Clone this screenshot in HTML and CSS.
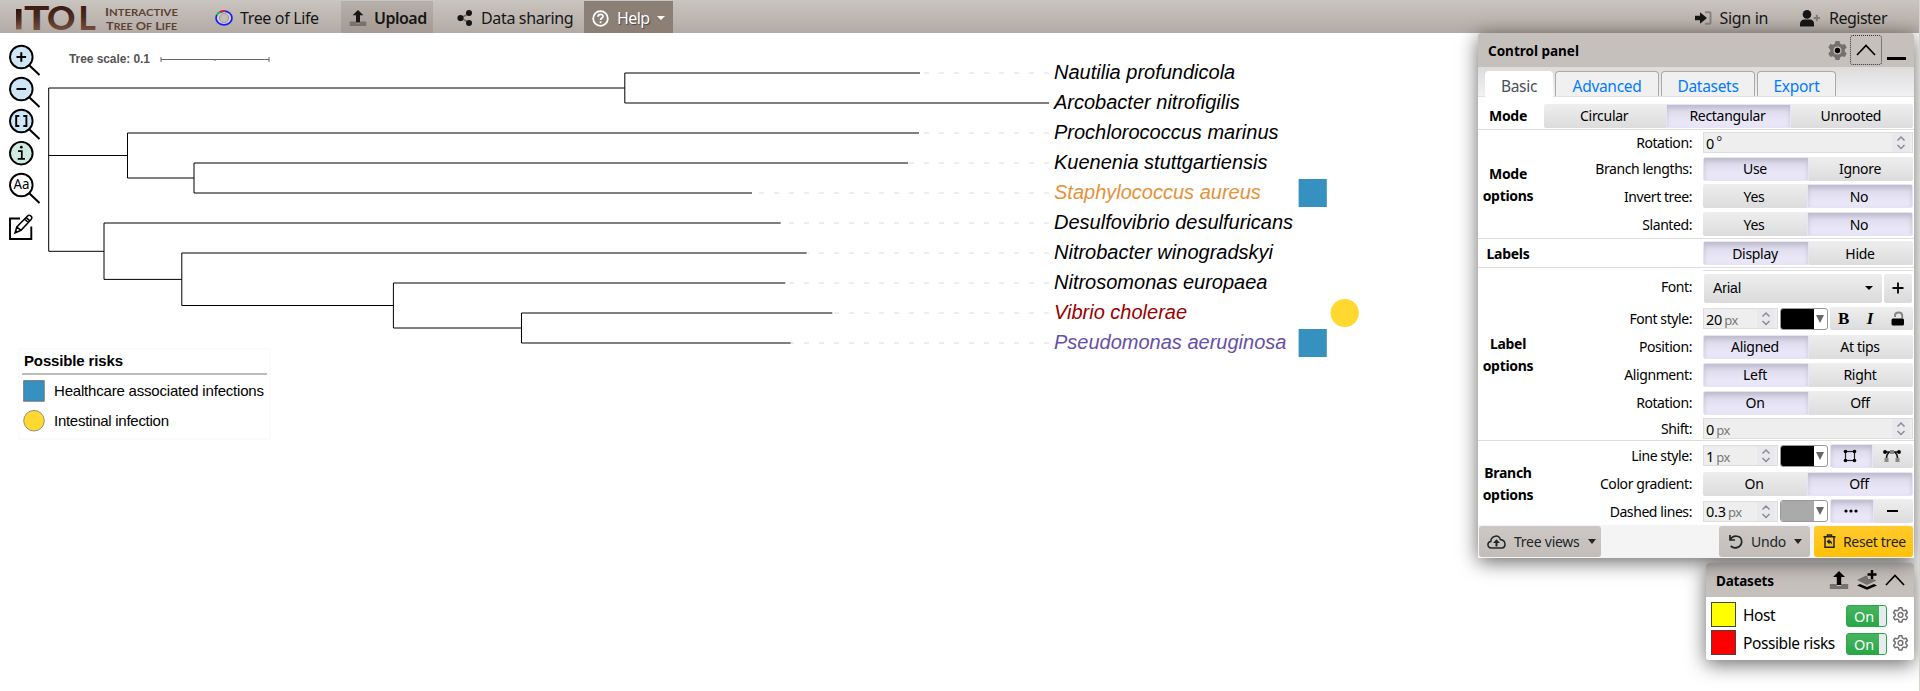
FILE: index.html
```html
<!DOCTYPE html>
<html lang="en">
<head>
<meta charset="utf-8">
<title>iTOL: Interactive Tree Of Life</title>
<link rel="stylesheet" href="styles.css">
</head>
<body>
<svg class="defs" width="0" height="0" aria-hidden="true">
  <defs>
    <linearGradient id="logo-fill" x1="0" y1="0" x2="0" y2="1">
      <stop offset="0" stop-color="#2e120c"/><stop offset=".5" stop-color="#4a2a20"/><stop offset="1" stop-color="#86604e"/>
    </linearGradient>
    <symbol id="i-upload" viewBox="0 0 20 20">
      <path d="M2 14h6v2h4v-2h6v5H2z" fill="#777270" transform="translate(-1.5 0) scale(1.15 1)"/>
      <path d="M10 1l6 6h-3.8v8H7.8V7H4z" fill="currentColor"/>
    </symbol>
    <symbol id="i-chev" viewBox="0 0 20 12"><path d="M1 11L10 1.5 19 11" fill="none" stroke="#000" stroke-width="1.7"/></symbol>
    <symbol id="i-step" viewBox="0 0 18 19"><path d="M5.500 7.500L9 4l3.500 3.500M5.500 12L9 15.500l3.500-3.500" fill="none" stroke="#8b8b96" stroke-width="1.500"/></symbol>
    <symbol id="i-lens" viewBox="0 0 34 34"><circle cx="13.300" cy="13" r="11.300" stroke="#000" stroke-width="1.900"/><path d="M21.500 21.500l10 9.500" stroke="#000" stroke-width="2"/></symbol>
    <symbol id="i-gear" viewBox="0 0 16 16">
      <path d="M6.700.8h2.600l.5 2 1.400.8 2-.6 1.300 2.300-1.500 1.400v1.600l1.500 1.400-1.300 2.300-2-.6-1.400.8-.5 2H6.700l-.5-2-1.400-.8-2 .6-1.300-2.300L3 8.300V6.700L1.500 5.300 2.800 3l2 .6 1.400-.8z" fill="none" stroke="#707070" stroke-width="1.400" stroke-linejoin="round"/>
      <circle cx="8" cy="7.500" r="2.300" fill="none" stroke="#707070" stroke-width="1.300"/>
    </symbol>
  </defs>
</svg>

<header class="topbar">
  <svg class="logo" width="185" height="32" viewBox="0 0 185 32">
    <g class="logo-big">
      <rect x="16" y="8" width="5.500" height="20.500" fill="url(#logo-fill)"/>
      <text x="24" y="28.500" textLength="25" lengthAdjust="spacingAndGlyphs">T</text>
      <text x="47" y="28.500" textLength="28" lengthAdjust="spacingAndGlyphs">O</text>
      <text x="78.500" y="28.500" textLength="17" lengthAdjust="spacingAndGlyphs">L</text>
    </g>
    <g class="logo-small">
      <text x="105" y="15" textLength="73" lengthAdjust="spacingAndGlyphs">I<tspan class="sc">NTERACTIVE</tspan></text>
      <text x="106" y="29" textLength="71" lengthAdjust="spacingAndGlyphs">T<tspan class="sc">REE</tspan> O<tspan class="sc">F</tspan> L<tspan class="sc">IFE</tspan></text>
    </g>
  </svg>
  <nav class="menu">
    <a class="item tol">
      <svg width="18" height="16" viewBox="0 0 18 16">
        <ellipse cx="9" cy="8" rx="8" ry="6.800" fill="#d6d4da" stroke="#1420ff" stroke-width="1.700"/>
        <path d="M5 2.100A8 6.800 0 0 1 10.500 1.200" fill="none" stroke="#f01818" stroke-width="1.700"/>
        <path d="M1.600 5.200A8 6.800 0 0 1 5 2.100" fill="none" stroke="#18d020" stroke-width="1.700"/>
        <circle cx="9" cy="8" r="4.600" fill="#c2bdba" stroke="#8e8a88" stroke-width=".8"/>
      </svg><span>Tree of Life</span></a>
    <a class="item upload"><svg width="18" height="18"><use href="#i-upload"/></svg><span>Upload</span></a>
    <a class="item share"><svg width="16" height="18" viewBox="0 0 16 18">
      <path d="M13 3.800L4 9l9 5.200" fill="none" stroke="#77706c" stroke-width="1.600"/>
      <circle cx="12" cy="4" r="3" fill="#161616"/><circle cx="3.500" cy="9" r="3.100" fill="#161616"/><circle cx="12" cy="14" r="3" fill="#161616"/>
    </svg><span>Data sharing</span></a>
    <a class="item help"><svg width="17" height="17" viewBox="0 0 17 17">
      <circle cx="8.500" cy="8.500" r="7.300" fill="none" stroke="#fff" stroke-width="1.800"/>
      <path d="M6 6.800c.1-3.400 5.200-3.100 5-.3-.1 1.600-2.400 1.600-2.400 3.400M8.600 11.300v1.900" fill="none" stroke="#fff" stroke-width="1.800"/>
    </svg><span>Help</span><i class="caret"></i></a>
  </nav>
  <nav class="account">
    <a class="item signin"><svg width="17" height="14" viewBox="0 0 17 14">
      <path d="M10 1.200h4.500a1 1 0 0 1 1 1v9.600a1 1 0 0 1-1 1H10" fill="none" stroke="#8a8481" stroke-width="2"/>
      <path d="M0 4.700h5V1.200L12 7l-7 5.800V9.300H0z" fill="#161616"/>
    </svg><span>Sign in</span></a>
    <a class="item register"><svg width="20" height="17" viewBox="0 0 20 17">
      <circle cx="7" cy="4.400" r="4.300" fill="#161616"/><path d="M0 16.500V14c0-3 2-4.500 4.500-4.500h5.500c2.500 0 4 1.500 4 4.500v2.500z" fill="#161616"/>
      <path d="M16.800 4.700v6.500M13.600 8h6.400" stroke="#807a77" stroke-width="1.900"/>
    </svg><span>Register</span></a>
  </nav>
</header>

<main class="canvas">
  <svg class="tree" width="1470" height="658" viewBox="0 33 1470 658">
    <text class="scale-text" x="69" y="63" textLength="81">Tree scale: 0.1</text>
    <path class="scale-bar" d="M161 59.500H269M161 57v5M269 57v5M215 59.500v1.500"/>
    <g class="branches">
      <path d="M48.700 88V251.300M48.700 88H624.800M624.800 73V103M624.800 73H920M624.800 103H1049"/>
      <path d="M48.700 155.500H127.500M127.500 133V178M127.500 133H919M127.500 178H194M194 163V193M194 163H908M194 193H752"/>
      <path d="M48.700 251.300H104M104 223V279.400M104 223H780.700M104 279.400H181.800M181.800 253V305.500M181.800 253H806.700"/>
      <path d="M181.800 305.500H393.400M393.400 283V328M393.400 283H785.300M393.400 328H521.500M521.500 313V343M521.500 313H832.300M521.500 343H790.700"/>
    </g>
    <path class="leaders" d="M1049 73.050H921M1049 133.050H920M1049 163.050H909M1049 193.050H753M1049 223.050H782M1049 253.050H808M1049 283.050H786M1049 313.050H833M1049 343.050H791"/>
    <g class="leaves">
      <text x="1054" y="79">Nautilia profundicola</text>
      <text x="1054" y="109">Arcobacter nitrofigilis</text>
      <text x="1054" y="139">Prochlorococcus marinus</text>
      <text x="1054" y="169">Kuenenia stuttgartiensis</text>
      <text x="1054" y="199" fill="#e69138">Staphylococcus aureus</text>
      <text x="1054" y="229">Desulfovibrio desulfuricans</text>
      <text x="1054" y="259">Nitrobacter winogradskyi</text>
      <text x="1054" y="289">Nitrosomonas europaea</text>
      <text x="1054" y="319" fill="#990000">Vibrio cholerae</text>
      <text x="1054" y="349" fill="#674ea7">Pseudomonas aeruginosa</text>
    </g>
    <rect x="1298.600" y="179" width="28.200" height="28" fill="#3690c0"/>
    <rect x="1298.600" y="329" width="28.200" height="28" fill="#3690c0"/>
    <circle cx="1344.700" cy="313" r="14.100" fill="#ffd92f"/>
    <g class="legend">
      <rect x="19" y="349" width="251" height="90" fill="#fff" stroke="#fafafa" stroke-width="1.500"/>
      <text class="legend-title" x="24" y="366" textLength="99">Possible risks</text>
      <path d="M22 374H267" stroke="#bcbcbc" stroke-width="2"/>
      <rect x="23.700" y="380.700" width="20.500" height="20.500" fill="#3690c0" stroke="#666" stroke-width=".8"/>
      <text x="54" y="396" textLength="210">Healthcare associated infections</text>
      <circle cx="34" cy="420.700" r="10.300" fill="#ffd92f" stroke="#777" stroke-width=".8"/>
      <text x="54" y="426" textLength="115">Intestinal infection</text>
    </g>
  </svg>

  <div class="tools">
    <svg width="34" height="32" viewBox="0 0 34 32"><use href="#i-lens" width="34" height="34" fill="#cfe6f6"/><path d="M8.500 13h9.600M13.300 8.200v9.600" stroke="#000" stroke-width="2"/></svg>
    <svg width="34" height="32" viewBox="0 0 34 32"><use href="#i-lens" width="34" height="34" fill="#cfe6f6"/><path d="M8.500 13h9.600" stroke="#000" stroke-width="2"/></svg>
    <svg width="34" height="32" viewBox="0 0 34 32"><use href="#i-lens" width="34" height="34" fill="#cfe6f6"/><path d="M11.300 8H8.200v10h3.100M15.300 8h3.100v10h-3.100" fill="none" stroke="#000" stroke-width="1.900"/></svg>
    <svg width="34" height="32" viewBox="0 0 34 32"><circle cx="13.300" cy="13.200" r="11.300" fill="#cfeae0" stroke="#000" stroke-width="1.900"/><path d="M10 11.200h3.800v7.600M9.700 18.900h7.300" fill="none" stroke="#000" stroke-width="1.700"/><circle cx="13.300" cy="7.200" r="1.400"/></svg>
    <svg width="34" height="32" viewBox="0 0 34 32"><use href="#i-lens" width="34" height="34" fill="#fff"/><text x="5.500" y="17.300" font-size="13.500" textLength="16" lengthAdjust="spacingAndGlyphs">Aa</text></svg>
    <svg class="edit" width="26" height="27" viewBox="0 0 26 27">
      <path d="M12 4.500H2V25h21.300V12.500" fill="none" stroke="#000" stroke-width="1.900"/>
      <path d="M7 19l1.800-6L19.500 2c1.300-1.200 2.400-.9 3.300-.1 1.200 1.100 1.500 2.200.3 3.500L13 16.300zM8.800 13l4.200 3.300M16.500 5l3.800 3.500M18 3.400l3.800 3.500" fill="#fff" stroke="#000" stroke-width="1.500"/>
      <path d="M7 19l.9-3 1.800 1.700z"/>
    </svg>
  </div>

  <aside class="panels">
    <section class="panel control">
      <div class="panel-head">
        <h2>Control panel</h2>
        <svg width="21" height="21" viewBox="0 0 21 21"><path d="M8.500 1h4l.6 2.600 2 1.100L17.700 4l2 3.500-1.900 1.900v2.200l1.900 1.900-2 3.500-2.600-.8-2 1.200-.6 2.600h-4l-.6-2.600-2-1.200-2.600.8-2-3.500 1.900-1.900V9.400L1.300 7.500l2-3.500 2.600.7 2-1.100z" fill="#74706e"/><circle cx="10.500" cy="10.500" r="4" fill="#bfb9b7"/><circle cx="10.500" cy="10.500" r="2.700" fill="#000"/></svg>
        <span class="focus"><svg width="20" height="12"><use href="#i-chev"/></svg></span>
        <i class="minimise"></i>
      </div>
      <div class="tabs"><a class="tab on t1">Basic</a><a class="tab t2">Advanced</a><a class="tab t3">Datasets</a><a class="tab t4">Export</a></div>

      <div class="group mode">
        <h3>Mode</h3>
        <div class="seg wide"><b>Circular</b><b class="on">Rectangular</b><b>Unrooted</b></div>
      </div>

      <div class="group">
        <h3>Mode options</h3>
        <div class="rows">
          <div class="row h25"><label>Rotation:</label><div class="field"><span>0 <small class="deg">°</small></span><svg width="18" height="19"><use href="#i-step"/></svg></div></div>
          <div class="row h27"><label>Branch lengths:</label><div class="seg"><b class="on">Use</b><b>Ignore</b></div></div>
          <div class="row h28"><label>Invert tree:</label><div class="seg"><b>Yes</b><b class="on">No</b></div></div>
          <div class="row h28"><label>Slanted:</label><div class="seg"><b>Yes</b><b class="on">No</b></div></div>
        </div>
      </div>

      <div class="group">
        <h3>Labels</h3>
        <div class="rows"><div class="row h28"><label></label><div class="seg"><b class="on">Display</b><b>Hide</b></div></div></div>
      </div>

      <div class="group">
        <h3>Label options</h3>
        <div class="rows">
          <div class="row h37"><label>Font:</label><div class="fontpick"><div class="select"><span>Arial</span><i class="caret"></i></div><div class="plus"><svg width="12" height="12" viewBox="0 0 12 12"><path d="M.5 6h11M6 .5v11" stroke="#000" stroke-width="1.800"/></svg></div></div></div>
          <div class="row h27"><label>Font style:</label><div class="combo">
            <div class="field short"><span>20 <small>px</small></span><svg width="18" height="19"><use href="#i-step"/></svg></div>
            <div class="color"><i class="black"></i><em></em></div>
            <div class="icons"><span class="bold">B</span><span class="ital">I</span><svg width="14" height="15" viewBox="0 0 14 15"><path d="M4 6V4.500C4 .4 11.200.4 11.200 4.500V7.500" fill="none" stroke="#858585" stroke-width="1.900"/><rect x=".5" y="7.500" width="12.500" height="7" rx="1.500"/></svg></div>
          </div></div>
          <div class="row h29"><label>Position:</label><div class="seg"><b class="on">Aligned</b><b>At tips</b></div></div>
          <div class="row h27"><label>Alignment:</label><div class="seg"><b class="on">Left</b><b>Right</b></div></div>
          <div class="row h29"><label>Rotation:</label><div class="seg"><b class="on">On</b><b>Off</b></div></div>
          <div class="row h23"><label>Shift:</label><div class="field"><span>0 <small>px</small></span><svg width="18" height="19"><use href="#i-step"/></svg></div></div>
        </div>
      </div>

      <div class="group last">
        <h3>Branch options</h3>
        <div class="rows">
          <div class="row h29"><label>Line style:</label><div class="combo">
            <div class="field short"><span>1 <small>px</small></span><svg width="18" height="19"><use href="#i-step"/></svg></div>
            <div class="color"><i class="black"></i><em></em></div>
            <div class="seg pair"><b class="on"><svg width="14" height="14" viewBox="0 0 14 14"><rect x="2.500" y="2.500" width="9" height="9" fill="none" stroke="#222" stroke-width="1.200"/><circle cx="2.500" cy="2.500" r="1.800"/><circle cx="11.500" cy="2.500" r="1.800"/><circle cx="2.500" cy="11.500" r="1.800"/><circle cx="11.500" cy="11.500" r="1.800"/></svg></b><b><svg width="18" height="14" viewBox="0 0 18 14"><path d="M1.500 3h15M6 3.500C4 5 3.500 7 3.500 9M12 3.500C14 5 14.500 7 14.500 9" fill="none" stroke="#111" stroke-width="1.500"/><circle cx="2" cy="3" r="1.900"/><circle cx="16" cy="3" r="1.900"/><rect x="7" y="1" width="4" height="4" fill="#888"/><rect x="1.500" y="9" width="4" height="4" fill="#888"/><rect x="12.500" y="9" width="4" height="4" fill="#888"/></svg></b></div>
          </div></div>
          <div class="row h27"><label>Color gradient:</label><div class="seg"><b>On</b><b class="on">Off</b></div></div>
          <div class="row h28"><label>Dashed lines:</label><div class="combo">
            <div class="field short"><span>0.3 <small>px</small></span><svg width="18" height="19"><use href="#i-step"/></svg></div>
            <div class="color"><i></i><em></em></div>
            <div class="seg pair dash"><b class="on"><svg width="14" height="4" viewBox="0 0 14 4"><circle cx="2" cy="2" r="1.600"/><circle cx="7" cy="2" r="1.600"/><circle cx="12" cy="2" r="1.600"/></svg></b><b><svg width="11" height="2"><rect width="11" height="2"/></svg></b></div>
          </div></div>
        </div>
      </div>

      <div class="foot">
        <a class="btn views"><svg width="19" height="14" viewBox="0 0 19 14"><path d="M4.500 13C-.5 12.500.2 6.800 3.800 6.500 4 .2 12.500-.8 13.300 4.500 19.500 5.300 19.200 12.700 14.500 13z" fill="none" stroke="#212529" stroke-width="1.500"/><path d="M9.500 11.500V7" stroke="#212529" stroke-width="2"/><path d="M6 8l3.500-3.800L13 8z" fill="#212529"/></svg><span>Tree views</span><i class="caret"></i></a>
        <a class="btn undo"><svg width="15" height="15" viewBox="0 0 15 15"><path d="M2 1v5h5M2.300 5.800C5 .5 13.500 1 13.700 7.600 13.500 13.500 6.500 15.500 2.700 12" fill="none" stroke="#212529" stroke-width="1.700"/></svg><span>Undo</span><i class="caret"></i></a>
        <a class="btn reset"><svg width="13" height="15" viewBox="0 0 13 15"><path d="M.5 2.800h12M4.500 2.500V1h4v1.500M2 3v10.300h9V3" fill="none" stroke="#212529" stroke-width="1.500"/><path d="M3.500 7.500L6.500 5v1.500c2 .1 2.700 1.500 2.700 4.500-.5-1.500-1.300-2-2.700-2v1.500z" fill="#212529"/></svg><span>Reset tree</span></a>
      </div>
    </section>

    <section class="panel datasets">
      <div class="ds-head">
        <h2>Datasets</h2>
        <svg width="20" height="20"><use href="#i-upload"/></svg>
        <svg width="20" height="20" viewBox="0 0 20 20"><path d="M0 15.500l3-1.500 7 3 7-3 3 1.500-10 4.300z"/><path d="M0 10l9-4.500 2 1.500v2h5l3.500 1.500L10 15z" fill="#77716f"/><path d="M15 0v9M10.500 4.500h9" stroke="#000" stroke-width="2.500"/></svg>
        <svg width="20" height="12"><use href="#i-chev"/></svg>
      </div>
      <div class="ds-row"><i class="swatch host"></i><span>Host</span><u>On</u><svg width="17" height="17"><use href="#i-gear"/></svg></div>
      <div class="ds-row"><i class="swatch risks"></i><span>Possible risks</span><u>On</u><svg width="17" height="17"><use href="#i-gear"/></svg></div>
    </section>
  </aside>
</main>
</body>
</html>
```
FILE: styles.css
```css
* { box-sizing: border-box; }
html, body { height: 100%; }
body {
  margin: 0;
  overflow: hidden;
  background: #fff;
  border-right: 1px solid #d8d3c6;
  font-family: "Noto Sans", "Open Sans", sans-serif;
  font-size: 14px;
  color: #000;
}
svg { display: block; flex: none; }
h2, h3 { margin: 0; }
.defs { position: absolute; }

/* top bar */
.topbar {
  height: 33px;
  display: flex;
  justify-content: space-between;
  background: linear-gradient(#cac4be, #b3aaa4);
  border-top: 1px solid #c6c6c6;
  font-size: 16px;
  letter-spacing: -0.35px;
  color: #161616;
}
.logo { width: 185px; overflow: visible; }
.logo-big text { font: 900 32px Lato, sans-serif; fill: url(#logo-fill); }
.logo-small text { font: 700 11.5px Lato, sans-serif; letter-spacing: 0; fill: #5d4136; }
.logo-small .sc { font-size: 9.5px; }
.menu { display: flex; flex: 1; padding-left: 20px; }
.account { display: flex; padding-right: 32px; }
.item { display: flex; align-items: center; height: 32px; padding-top: 2px; white-space: nowrap; }
.tol { width: 136px; padding-left: 10px; gap: 7px; }
.upload { width: 92px; padding-left: 8px; gap: 7px; background: rgba(110, 95, 88, .2); font-weight: 600; letter-spacing: -.5px; }
.share { width: 151px; padding-left: 24px; gap: 8px; }
.help { width: 89px; padding-left: 8px; gap: 8px; background: #8c7f76; color: #fff; letter-spacing: -.6px; text-shadow: 1px 1px 1px #444; }
.caret { border: 4px solid transparent; border-top-color: currentColor; border-bottom: 0; }
.signin { gap: 8px; padding-right: 32px; }
.register { gap: 9px; letter-spacing: -.5px; }

/* tree canvas */
.canvas { position: relative; height: 658px; }
.tree text { font-family: "Liberation Sans", Arial, sans-serif; }
.tree .scale-text { font-size: 12px; font-weight: 700; fill: #555; }
.scale-bar { fill: none; stroke: #666; stroke-width: 1; }
.branches { fill: none; stroke: #000; stroke-width: 1; }
.leaders { fill: none; stroke: #999; stroke-width: .35; stroke-dasharray: 5 10; }
.leaves text { font-size: 20px; font-style: italic; }
.legend text { font-size: 15px; }
.legend .legend-title { font-weight: 700; }
.tools { position: absolute; left: 8px; top: 11px; display: flex; flex-direction: column; }
.tools .edit { margin-top: 10px; }

/* floating panels */
.panels { position: absolute; right: 5px; top: 0; width: 436px; display: flex; flex-direction: column; align-items: flex-end; gap: 5px; }
.panel { background: #fff; border-radius: 3px; box-shadow: 0 4px 20px rgba(0, 0, 0, .6); }
.control { position: relative; z-index: 1; width: 436px; }
.panel-head { height: 34px; display: flex; align-items: center; padding: 0 8px 0 10px; background: #c6c0bd; border-radius: 3px 3px 0 0; }
.panel h2 { flex: 1; font-size: 13.5px; font-weight: 700; padding-top: 2px; }
.focus { width: 32px; height: 30px; margin-left: 2px; padding: 8px 5px; border: 1px dotted #333; border-radius: 3px; }
.minimise { width: 19px; height: 3px; margin: 17px 0 0 5px; background: #000; }
.tabs { height: 30px; display: flex; align-items: flex-end; gap: 2px; padding-left: 7px; background: linear-gradient(#dcdcdd, #f1f1f3); border-bottom: 1px solid #dee2e6; }
.tab { height: 25px; line-height: 29px; text-align: center; font-size: 15.5px; letter-spacing: -.3px; color: #007bff; background: #f0f0f1; border: 1px solid #aaa; border-bottom: 0; border-radius: 4px 4px 0 0; }
.tab.on { color: #495057; background: #fff; border-color: #fff; height: 26px; margin-bottom: -1px; line-height: 29px; }
.t1 { width: 68px; }
.t2 { width: 104px; }
.t3 { width: 94px; }
.t4 { width: 79px; }

.group { display: flex; align-items: center; border-bottom: 1px solid #ddd; }
.group.last { border-bottom: 0; }
.group.mode { height: 33px; }
.group h3 { width: 60px; padding-top: 2px; font-size: 14px; font-weight: 700; line-height: 22px; text-align: center; letter-spacing: -.3px; }
.rows { flex: 1; }
.row { display: flex; align-items: center; padding-right: 1px; }
.h23 { height: 23px; }
.h25 { height: 25px; }
.h27 { height: 27px; }
.h28 { height: 28px; }
.h29 { height: 29px; }
.h37 { height: 37px; }
.row label { flex: 1; padding-right: 11px; text-align: right; letter-spacing: -.42px; }

.seg { display: flex; width: 210px; height: 24px; }
.seg b { flex: 1; display: flex; align-items: center; justify-content: center; padding-right: 2px; font-weight: 400; letter-spacing: -.3px; background: linear-gradient(#eee, #dcdcdc); }
.seg b:first-child { border-radius: 2px 0 0 2px; }
.seg b:last-child { border-radius: 0 2px 2px 0; }
.seg .on { background: linear-gradient(#d7d5e6, #e8e6f7 70%); border: 1px solid #e6e4f7; box-shadow: inset 0 3px 5px rgba(0, 0, 0, .13); }
.seg.wide { width: 369px; margin: 5px 0 0 6px; }
.group.mode h3 { padding-top: 5px; }
.seg.pair { width: 83px; margin-left: 2px; }
.seg.dash .on { flex: 0 0 44px; }

.field { width: 210px; height: 21px; display: flex; align-items: center; justify-content: space-between; padding: 0 2px; background: #eee; border: 1px solid #ddd; }
.field span { font-size: 14.500px; letter-spacing: -.2px; white-space: nowrap; }
.field small { font-size: 13px; color: #777; margin-left: -1.500px; letter-spacing: -.5px; }
.field .deg { position: relative; top: -2px; font-size: 14px; color: #333; }
.field svg { background: #e8e8ed; }
.field.short { width: 75px; }
.combo { display: flex; align-items: center; width: 210px; }
.color { display: flex; align-items: center; width: 48px; height: 22px; margin-left: 2px; background: #fff; border: 1px solid #999; border-radius: 3px; overflow: hidden; }
.color i { width: 33px; height: 20px; background: #aaa; }
.color .black { background: #000; }
.color em { margin-left: 2px; border: 4.500px solid transparent; border-top: 8px solid #666; border-bottom: 0; }
.icons { display: flex; justify-content: space-between; align-items: center; width: 83px; height: 23px; margin-left: 2px; padding: 0 8px; background: linear-gradient(#eee, #dcdcdc); border-radius: 2px; }
.icons span { font: 700 17px "Liberation Serif", serif; }
.icons .ital { font-style: italic; }
.fontpick { width: 210px; display: flex; gap: 2px; padding: 0 1px 1px; height: 34px; border-top: 1px solid #ddd; align-items: flex-end; }
.select, .plus { height: 29px; display: flex; align-items: center; background: linear-gradient(#eee, #dadada); border-radius: 2px; }
.select { width: 178px; justify-content: space-between; padding: 0 9px; font: 14px "Liberation Sans", Arial, sans-serif; }
.plus { width: 28px; justify-content: center; }

.foot { height: 33px; display: flex; align-items: center; padding: 0 1px; background: #f4f4f4; }
.btn { height: 31px; display: flex; align-items: center; border-radius: 3px; background: linear-gradient(#cdc8c5, #c3bdb9); color: #212529; letter-spacing: -.25px; }
.btn .caret { border-width: 5px 4.500px 0; }
.views { width: 122px; padding-left: 8px; gap: 8px; }
.undo { width: 91px; margin-left: auto; padding-left: 9px; gap: 8px; }
.reset { width: 99px; margin-left: 4px; padding-left: 9px; gap: 7px; background: linear-gradient(#ffca2c, #ffc107); letter-spacing: -.35px; white-space: nowrap; }

.datasets { width: 208px; height: 97px; }
.ds-head { height: 34px; display: flex; align-items: center; gap: 8px; padding: 0 9px 0 10px; margin-bottom: 5px; background: #c6c0bd; border-radius: 3px 3px 0 0; }
.ds-head h2 { letter-spacing: -.2px; }
.ds-row { height: 28px; display: flex; padding: 0 5px; align-items: flex-start; }
.ds-row span { flex: 1; margin: 2px 0 0 7px; font-size: 15.500px; line-height: 22px; letter-spacing: -.4px; white-space: nowrap; }
.ds-row svg { margin: 5px 0 0 5px; }
.swatch { width: 25px; height: 25px; border: 1px solid #444; }
.host { background: #ff0; }
.risks { background: #f00; }
.ds-row u { width: 41px; height: 22px; margin-top: 3px; padding-left: 7px; line-height: 20px; text-decoration: none; color: #fff; font-size: 14.500px; background: linear-gradient(90deg, transparent 32px, #e6ebef 32px), linear-gradient(#48b461, #28a745); border: 1px solid #28a745; border-radius: 3px; }
```
